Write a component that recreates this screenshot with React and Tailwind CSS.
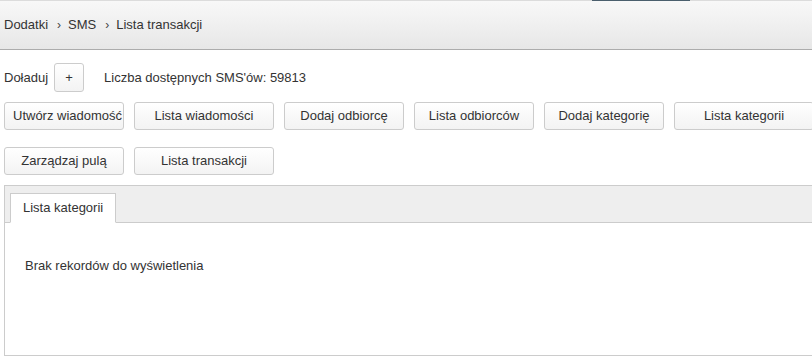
import React from 'react';

const buttons = [
  { label: 'Utwórz wiadomość', w: 'w-[120px]' },
  { label: 'Lista wiadomości', w: 'w-[140px]' },
  { label: 'Dodaj odbiorcę', w: 'w-[120px]' },
  { label: 'Lista odbiorców', w: 'w-[120px]' },
  { label: 'Dodaj kategorię', w: 'w-[120px]' },
  { label: 'Lista kategorii', w: 'w-[140px]' },
  { label: 'Zarządzaj pulą', w: 'w-[120px]' },
  { label: 'Lista transakcji', w: 'w-[140px]' },
];

const Chevron = () => <span className="ml-[9px] mr-[7px] text-[12px] text-[#444]">›</span>;

const App = () => {
  return (
    <div className="w-[812px] h-[356px] overflow-hidden bg-white font-['Liberation_Sans',Arial,sans-serif] text-[13px] text-[#333]">
      {/* Nagłówek z okruszkami */}
      <div className="relative h-[50px] border-t border-b border-t-[#dcdcdc] border-b-[#acacac] bg-gradient-to-b from-[#f8f8f8] to-[#e7e7e7]">
        <div className="absolute -top-px left-[592px] w-[98px] h-px bg-[#4b5f6d]"></div>
        <div className="flex items-center h-full px-[4px]">
          <span>Dodatki</span>
          <Chevron />
          <span>SMS</span>
          <Chevron />
          <span>Lista transakcji</span>
        </div>
      </div>

      <div className="w-[830px] px-[4px]">
        {/* Doładowanie */}
        <div className="mt-[13px] flex items-center">
          <span>Doładuj</span>
          <button className="ml-[6px] w-[30px] h-[29px] border border-[#ccc] rounded-[3px] bg-gradient-to-b from-white to-[#f3f3f3] text-[#333]">+</button>
          <span className="ml-[20px]">Liczba dostępnych SMS'ów: 59813</span>
        </div>

        {/* Przyciski akcji */}
        <div className="mt-[10px] flex flex-wrap gap-x-[10px] gap-y-[17px]">
          {buttons.map((b) => (
            <button
              key={b.label}
              className={`${b.w} h-[28px] px-[8px] border border-[#ccc] rounded-[3px] bg-gradient-to-b from-white to-[#f3f3f3] text-[#333] whitespace-nowrap overflow-hidden`}
            >
              {b.label}
            </button>
          ))}
        </div>

        {/* Panel z zakładkami */}
        <div className="mt-[10px] h-[171px] border border-[#ccc]">
          <div className="h-[37px] bg-[#eee] border-b border-[#ccc] flex items-end pl-[5px]">
            <div className="h-[30px] -mb-px px-[12px] flex items-center bg-white border border-[#ccc] border-b-white">
              Lista kategorii
            </div>
          </div>
          <div className="px-[20px] pt-[34px] leading-[18px]">Brak rekordów do wyświetlenia</div>
        </div>
      </div>
    </div>
  );
};

export default App;
